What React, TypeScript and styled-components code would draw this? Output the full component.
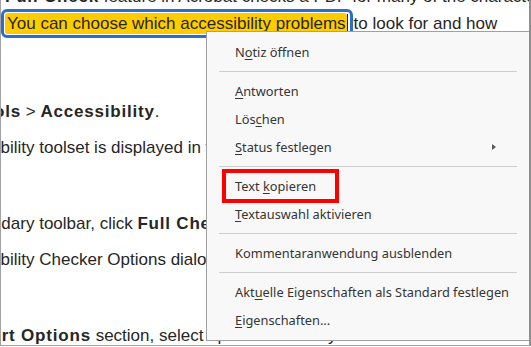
import React from "react";
import styled, { createGlobalStyle } from "styled-components";

const Global = createGlobalStyle`
  html, body { margin: 0; padding: 0; background: #ffffff; }
  body { width: 531px; height: 347px; overflow: hidden; }
`;

const Frame = styled.div`
  position: relative;
  box-sizing: border-box;
  width: 531px;
  height: 346px;
  overflow: hidden;
  background: #ffffff;
  border-left: 1px solid #a3a3a3;
  border-right: 2px solid #8f8f8f;
  border-bottom: 1px solid #a3a3a3;
  font-family: "Liberation Sans", Arial, sans-serif;
  color: #262626;
`;

const Doc = styled.div`
  display: flex;
  flex-direction: column;
  margin-top: -16px;
  font-size: 17px;
`;

const Para = styled.div`
  display: flex;
  flex-direction: column;
`;

const Steps = styled.div`
  display: flex;
  flex-direction: column;
  gap: 50px;
  margin-top: 63px;
`;

const Step = styled.div`
  display: flex;
  flex-direction: column;
  gap: 10px;
`;

const Line = styled.div<{ $indent?: number }>`
  height: 26px;
  line-height: 26px;
  white-space: nowrap;
  text-indent: ${(p) => p.$indent ?? 0}px;
`;

const Bold = styled.b`
  font-weight: 700;
  letter-spacing: 0.8px;
`;

const Highlight = styled.span`
  display: inline-block;
  margin: -1.5px 1px -1.5px 0;
  padding: 1px 2px 1px 1px;
  border: 3px solid #2d6fc6;
  border-radius: 6px;
  background: #ffffff;
  line-height: 21px;
  text-indent: 0;
`;

const Mark = styled.span`
  display: inline-block;
  padding: 0 1px 0 2px;
  border-radius: 3px;
  background: #ffcc00;
  line-height: 21px;
`;

const Caret = styled.span`
  display: inline-block;
  width: 1px;
  height: 19px;
  background: #1a1a1a;
  vertical-align: -4px;
`;

const Menu = styled.div`
  position: absolute;
  left: 205px;
  top: 31px;
  width: 324px;
  height: 310px;
  box-sizing: border-box;
  display: flex;
  flex-direction: column;
  padding-top: 6px;
  background: #f8f8f8;
  border: 1px solid #a0a0a0;
  font-family: "Noto Sans", "Open Sans", sans-serif;
  font-size: 12.8px;
  color: #353535;
`;

const Item = styled.div`
  position: relative;
  display: flex;
  align-items: center;
  justify-content: space-between;
  height: 28px;
  padding: 0 33px 0 28px;
  white-space: nowrap;
`;

const Separator = styled.div`
  height: 1px;
  margin: 5px 12px 5px 12px;
  background: #cdcdcd;
`;

const Key = styled.span`
  text-decoration: underline;
  text-underline-offset: 2px;
  text-decoration-thickness: 1px;
`;

const SubArrow = styled.span`
  width: 0;
  height: 0;
  border-left: 4px solid #5a5a5a;
  border-top: 3.5px solid transparent;
  border-bottom: 3.5px solid transparent;
`;

const Callout = styled.span`
  position: absolute;
  left: 15px;
  top: -3px;
  width: 117px;
  height: 34px;
  box-sizing: border-box;
  border: 4px solid #ff0000;
  pointer-events: none;
`;

export default function App() {
  return (
    <>
      <Global />
      <Frame>
        <Doc>
          <Para>
            <Line $indent={4}>
              <Bold>Full Check</Bold> feature in Acrobat checks a PDF for many of the characteristics
            </Line>
            <Line>
              <Highlight>
                <Mark>You can choose which accessibility problems</Mark>
                <Caret />
              </Highlight>
              to look for and how
            </Line>
          </Para>
          <Steps>
            <Step>
              <Line $indent={-28}>
                <Bold>Tools</Bold> &gt; <Bold>Accessibility</Bold>.
              </Line>
              <Line $indent={-59}>
                Accessibility toolset is displayed in the secondary toolbar.
              </Line>
            </Step>
            <Step>
              <Line $indent={-45}>
                secondary toolbar, click <Bold>Full Check</Bold>.
              </Line>
              <Line $indent={-59}>
                Accessibility Checker Options dialog box opens.
              </Line>
            </Step>
            <Step>
              <Line $indent={-45}>
                <Bold>Report Options</Bold> section, select options for how you want to view the results
              </Line>
            </Step>
          </Steps>
        </Doc>

        <Menu>
          <Item>
            <span>N<Key>o</Key>tiz öffnen</span>
          </Item>
          <Separator />
          <Item>
            <span><Key>A</Key>ntworten</span>
          </Item>
          <Item>
            <span>Lös<Key>c</Key>hen</span>
          </Item>
          <Item>
            <span><Key>S</Key>tatus festlegen</span>
            <SubArrow />
          </Item>
          <Separator />
          <Item>
            <span>Text <Key>k</Key>opieren</span>
            <Callout />
          </Item>
          <Item>
            <span><Key>T</Key>extauswahl aktivieren</span>
          </Item>
          <Separator />
          <Item>
            <span>Kommentaranwendung ausblenden</span>
          </Item>
          <Separator />
          <Item>
            <span>Akt<Key>u</Key>elle Eigenschaften als Standard festlegen</span>
          </Item>
          <Item>
            <span><Key>E</Key>igenschaften...</span>
          </Item>
        </Menu>
      </Frame>
    </>
  );
}
